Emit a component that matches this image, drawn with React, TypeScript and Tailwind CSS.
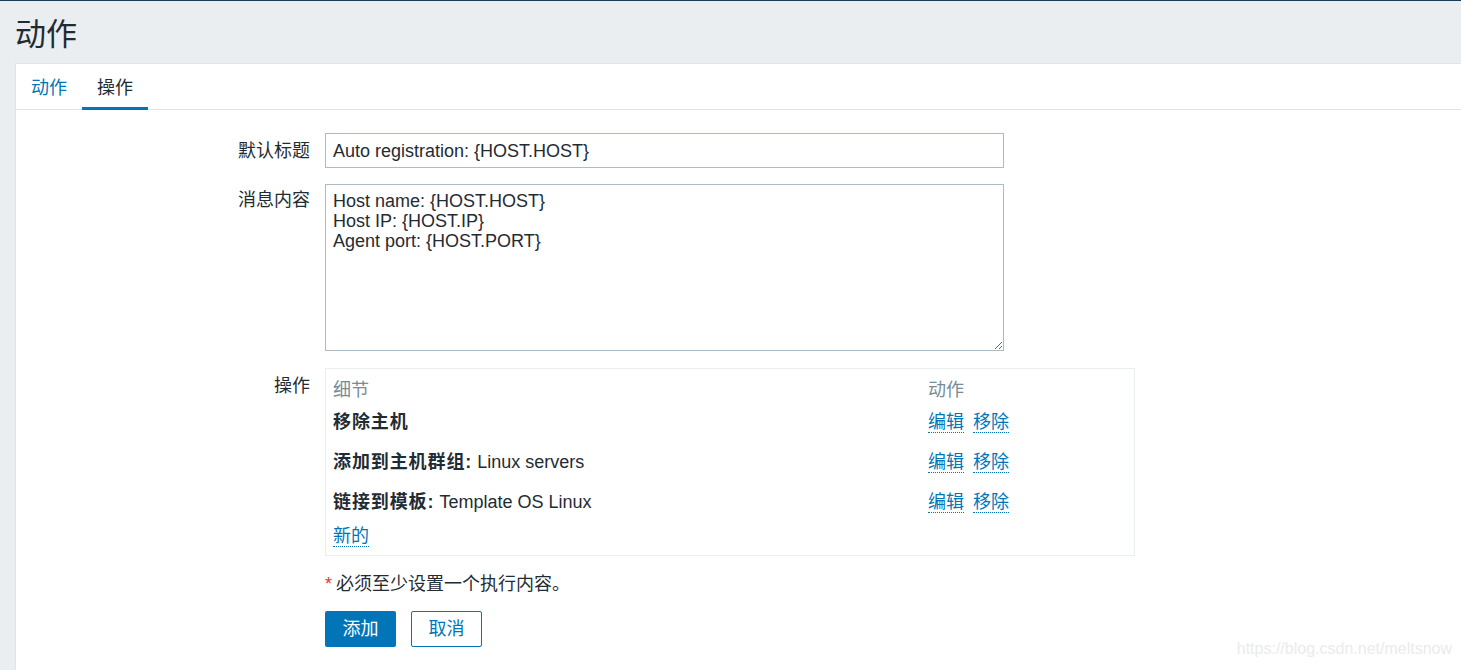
import React from 'react';

const font = 'font-["Liberation_Sans","Noto_Sans_CJK_SC",sans-serif]';

const ops = [
    {label: '移除主机', value: ''},
    {label: '添加到主机群组:', value: 'Linux servers'},
    {label: '链接到模板:', value: 'Template OS Linux'},
];

const DottedLink: React.FC<{children: React.ReactNode}> = ({children}) => (
    <a href="#" className="text-[#0275b8] border-b border-dotted border-[#0275b8] leading-[20px]">
        {children}
    </a>
);

const App: React.FC = () => {
    return (
        <div className={`${font} relative w-[1461px] h-[670px] overflow-hidden bg-[#ebeef0] text-[#1f2c33] border-t border-[#1b3a55]`}>
            <h1 className="pl-[15px] h-[62px] flex items-center text-[31px] font-normal leading-none pt-[5px]">动作</h1>

            <div className="ml-[15px] bg-white border-l border-t border-[#dfe4e7] h-[620px]">
                {/* tabs */}
                <div className="flex h-[46px] border-b border-[#dfe4e7] text-[18px]">
                    <div className="px-[15px] flex items-center text-[#0275b8] pt-[4px]">动作</div>
                    <div className="px-[15px] flex items-center border-b-[3px] border-[#0275b8] -mb-px pt-[6px]">操作</div>
                </div>

                <div className="grid grid-cols-[294px_1fr] gap-x-[15px] pt-[23px] text-[18px]">
                    <div className="text-right h-[35px] flex items-center justify-end pt-[1px]">默认标题</div>
                    <div>
                        <input
                            className="w-[679px] h-[35px] border border-[#acbbc4] px-[7px] pt-[1px] text-[18px] outline-none"
                            defaultValue="Auto registration: {HOST.HOST}"
                        />
                    </div>

                    <div className="text-right mt-[16px] pt-[6px] leading-[20px]">消息内容</div>
                    <div className="mt-[16px]">
                        <textarea
                            className="block w-[679px] h-[167px] border border-[#acbbc4] px-[7px] pt-[6px] text-[18px] leading-[20px] outline-none"
                            defaultValue={'Host name: {HOST.HOST}\nHost IP: {HOST.IP}\nAgent port: {HOST.PORT}'}
                        />
                    </div>

                    <div className="text-right mt-[17px] pt-[8px] leading-[20px]">操作</div>
                    <div className="mt-[17px]">
                        <div className="w-[810px] border border-[#ebeef0] px-[7px] pt-[5px] pb-[1px]">
                            <div className="flex h-[32px] items-center text-[#768d99]">
                                <div className="w-[595px]">细节</div>
                                <div>动作</div>
                            </div>
                            {ops.map((op, i) => (
                                <div key={i} className={`flex h-[32px] items-center ${i > 0 ? 'mt-[8px]' : ''}`}>
                                    <div className="w-[595px]">
                                        <span className="font-bold tracking-[0.9px]">{op.label}</span>
                                        {op.value && <span> {op.value}</span>}
                                    </div>
                                    <div className="flex gap-[9px]">
                                        <DottedLink>编辑</DottedLink>
                                        <DottedLink>移除</DottedLink>
                                    </div>
                                </div>
                            ))}
                            <div className="flex h-[36px] items-center">
                                <DottedLink>新的</DottedLink>
                            </div>
                        </div>

                        <div className="mt-[17px] h-[22px] flex items-center">
                            <span className="text-[#e33734] mr-[4px]">*</span>
                            <span>必须至少设置一个执行内容。</span>
                        </div>

                        <div className="flex gap-[15px] mt-[16px]">
                            <button className="w-[71px] h-[36px] bg-[#0275b8] text-white rounded-[2px] text-[18px] pt-[1px]">添加</button>
                            <button className="w-[71px] h-[36px] bg-white border border-[#0275b8] text-[#0275b8] rounded-[2px] text-[18px] pt-[1px]">取消</button>
                        </div>
                    </div>
                </div>
            </div>

            <div className="absolute right-[9px] bottom-[9px] text-[16px] text-[#ebebeb]">https://blog.csdn.net/meltsnow</div>
        </div>
    );
};

export default App;
